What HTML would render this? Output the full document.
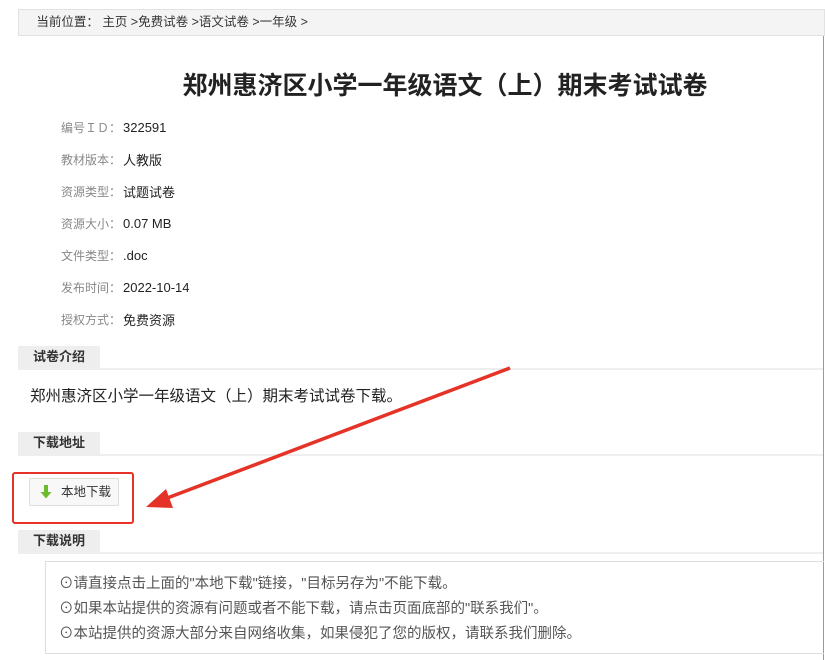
<!DOCTYPE html>
<html><head><meta charset="utf-8"><style>
body{margin:0;width:825px;height:660px;background:#fff;font-family:"Liberation Sans","Noto Sans CJK SC",sans-serif;position:relative;overflow:hidden;color:#333}
.a{position:absolute;white-space:nowrap}
.bc{left:18px;top:9px;width:805px;height:25px;background:#f4f4f4;border:1px solid #e2e2e2;font-size:12.5px;line-height:25px;color:#333}
.title{left:0;width:890px;text-align:center;top:66px;font-size:25px;font-weight:bold;color:#222}
.lab{left:61px;font-size:12px;color:#888}
.val{left:123px;font-size:13px;color:#222}
.n{top:2px;position:relative}
.sec{left:18px;width:805px;height:22px;border-bottom:2px solid #eee}
.sec span{display:inline-block;background:#eee;height:22px;line-height:22px;padding:0 15px;font-size:13px;font-weight:bold;color:#333}
</style></head><body>
<div style="position:absolute;left:823px;top:35px;width:1px;height:625px;background:#999"></div>
<div class="a bc">&nbsp;&nbsp;&nbsp;&nbsp;&nbsp;当前位置： 主页 &gt;免费试卷 &gt;语文试卷 &gt;一年级 &gt;</div>
<div class="a title">郑州惠济区小学一年级语文（上）期末考试试卷</div>
<div class="a lab" style="top:119px">编号ＩＤ：</div><div class="a val" style="top:120px">322591</div>
<div class="a lab" style="top:151px">教材版本：</div><div class="a val" style="top:150px">人教版</div>
<div class="a lab" style="top:183px">资源类型：</div><div class="a val" style="top:182px">试题试卷</div>
<div class="a lab" style="top:215px">资源大小：</div><div class="a val" style="top:216px">0.07 MB</div>
<div class="a lab" style="top:247px">文件类型：</div><div class="a val" style="top:248px">.doc</div>
<div class="a lab" style="top:279px">发布时间：</div><div class="a val" style="top:280px">2022-10-14</div>
<div class="a lab" style="top:311px">授权方式：</div><div class="a val" style="top:310px">免费资源</div>
<div class="a sec" style="top:346px"><span>试卷介绍</span></div>
<div class="a" style="left:30px;top:384px;font-size:15.5px;color:#222">郑州惠济区小学一年级语文（上）期末考试试卷下载。</div>
<div class="a sec" style="top:432px"><span>下载地址</span></div>
<div class="a" style="left:29px;top:478px;width:88px;height:26px;border:1px solid #ddd;border-radius:2px;background:#f8f8f8;font-size:12.5px;line-height:26px;color:#333">
<svg style="position:absolute;left:10px;top:6px" width="12" height="14" viewBox="0 0 12 14"><path d="M4 0h4v7h3.5L6 13.5 0.5 7H4z" fill="#6cbb2a"/></svg>
<span style="position:absolute;left:31px">本地下载</span></div>
<div class="a" style="left:12px;top:472px;width:118px;height:48px;border:2.5px solid #e53327;border-radius:3px"></div>
<svg class="a" style="left:0;top:0" width="825" height="660"><line x1="510" y1="368" x2="162" y2="500" stroke="#e53327" stroke-width="3.5"/><polygon points="146,507 166,489 173,508" fill="#e53327"/></svg>
<div class="a sec" style="top:530px"><span>下载说明</span></div>
<div class="a" style="left:45px;top:561px;width:778px;height:91px;border:1px solid #ddd;border-right:none"></div>
<div class="a" style="left:59px;top:572px;font-size:14.5px;color:#555;line-height:25px">⊙请直接点击上面的"本地下载"链接，"目标另存为"不能下载。<br>⊙如果本站提供的资源有问题或者不能下载，请点击页面底部的"联系我们"。<br>⊙本站提供的资源大部分来自网络收集，如果侵犯了您的版权，请联系我们删除。</div>
</body></html>
